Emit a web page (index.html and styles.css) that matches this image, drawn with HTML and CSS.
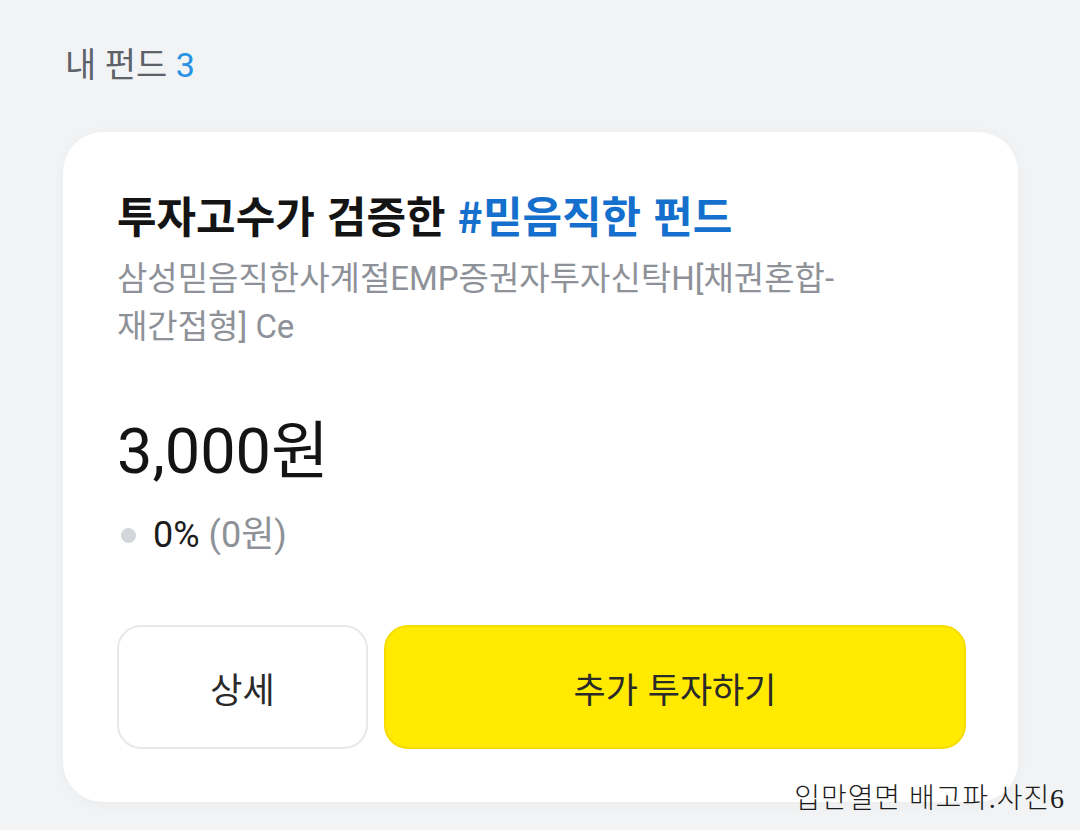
FILE: index.html
```html
<!DOCTYPE html>
<html lang="ko">
<head>
<meta charset="utf-8">
<link rel="stylesheet" href="styles.css">
</head>
<body>
<div class="page">
  <h2 class="section-title">내 펀드 <span class="count">3</span></h2>
  <div class="card">
    <h3 class="fund-title">투자고수가 검증한 <span class="tag">#믿음직한 펀드</span></h3>
    <p class="fund-name">삼성믿음직한사계절EMP증권자투자신탁H[채권혼합-<br>재간접형] Ce</p>
    <div class="amount">3,000원</div>
    <div class="yield"><span class="dot"></span><span class="rate">0%</span> <span class="gain">(0원)</span></div>
    <div class="actions">
      <button class="btn btn-detail">상세</button>
      <button class="btn btn-invest">추가 투자하기</button>
    </div>
  </div>
</div>
<div class="watermark">입만열면 배고파.사진6</div>
</body>
</html>
```

FILE: styles.css
```css
* { box-sizing: border-box; }
html, body { margin: 0; padding: 0; }
body {
  width: 1080px;
  height: 830px;
  overflow: hidden;
  background: #f2f3f5;
  font-family: Roboto, "Noto Sans CJK KR", sans-serif;
  position: relative;
}
.page {
  padding: 45px 62px 0 63px;
}
.section-title {
  margin: 0 0 0 2px;
  font-size: 34px;
  line-height: 40px;
  font-weight: 400;
  color: #5d6168;
}
.count { color: #2592e4; }
.card {
  margin-top: 47px;
  background: #fff;
  border-radius: 40px;
  padding: 58px 52px 53px 54px;
  box-shadow: 0 2px 14px rgba(0, 0, 0, 0.035);
}
.fund-title {
  margin: 0;
  font-family: "Noto Sans CJK KR", sans-serif;
  font-size: 43px;
  line-height: 48px;
  font-weight: 700;
  color: #141414;
}
.tag { color: #1470cc; }
.fund-name {
  margin: 17px 0 0;
  font-size: 33px;
  line-height: 48px;
  color: #8e9298;
}
.amount {
  margin-top: 65px;
  font-size: 63px;
  line-height: 72px;
  color: #141414;
}
.yield {
  margin-top: 25px;
  display: flex;
  align-items: center;
  font-size: 36px;
  line-height: 44px;
}
.dot {
  width: 15px;
  height: 15px;
  border-radius: 50%;
  background: #d3d6db;
  margin: 0 17px 0 4px;
}
.rate { color: #1c1c1c; }
.gain { color: #8e9298; margin-left: 9px; }
.actions {
  margin-top: 68px;
  display: flex;
  gap: 16px;
}
.btn {
  height: 124px;
  border-radius: 24px;
  font-family: "Noto Sans CJK KR", sans-serif;
  font-size: 35px;
  color: #2a2a2a;
  cursor: pointer;
}
.btn-detail {
  width: 251px;
  background: #fff;
  border: 2px solid #e6e8eb;
}
.btn-invest {
  flex: 1;
  background: #ffea00;
  border: 2px solid #f6dc00;
}
.watermark {
  position: absolute;
  right: 15px;
  bottom: 14px;
  font-family: "Liberation Serif", "Noto Sans CJK KR", serif;
  font-weight: 300;
  font-size: 28px;
  color: #1c1c1c;
  letter-spacing: 0.9px;
}
```
